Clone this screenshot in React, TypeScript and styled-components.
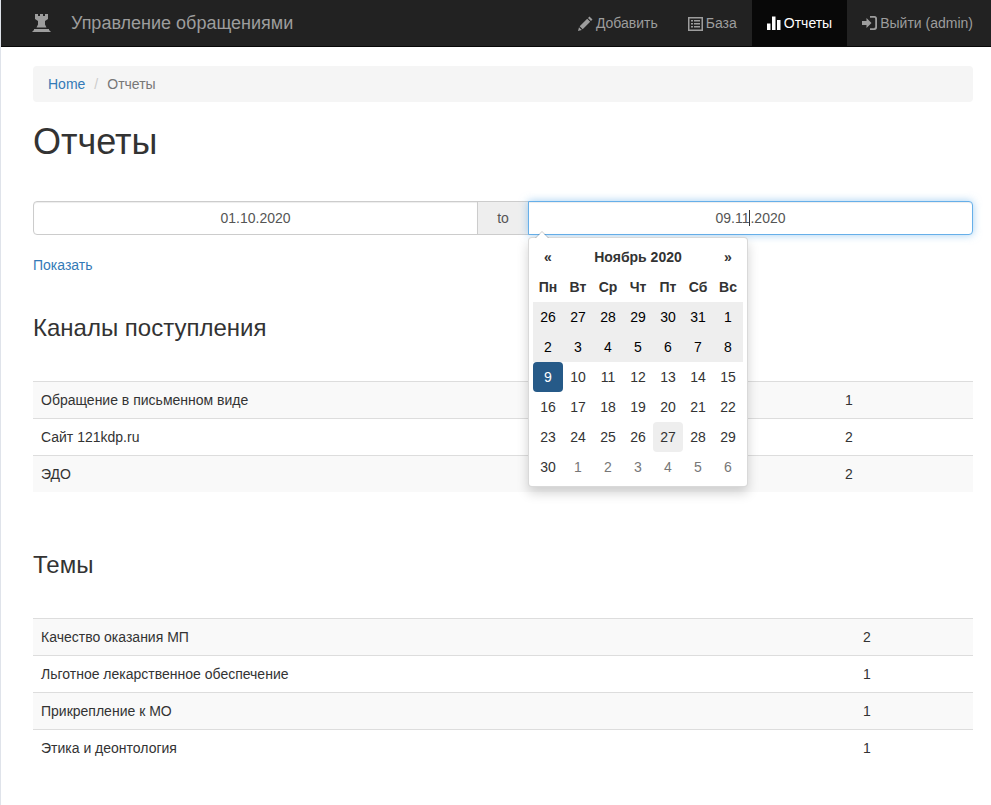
import React from "react";
import styled, { createGlobalStyle } from "styled-components";

const channels = [
  { name: "Обращение в письменном виде", count: 1 },
  { name: "Сайт 121kdp.ru", count: 2 },
  { name: "ЭДО", count: 2 },
];

const topics = [
  { name: "Качество оказания МП", count: 2 },
  { name: "Льготное лекарственное обеспечение", count: 1 },
  { name: "Прикрепление к МО", count: 1 },
  { name: "Этика и деонтология", count: 1 },
];

const weekDays = ["Пн", "Вт", "Ср", "Чт", "Пт", "Сб", "Вс"];

type TDay = { label: number; kind?: "range" | "active" | "hover" | "muted" };

const range = (from: number, to: number, kind?: TDay["kind"]): TDay[] =>
  Array.from({ length: to - from + 1 }, (_, i) => ({ label: from + i, kind }));

const days: TDay[] = [
  ...range(26, 31, "range"),
  ...range(1, 8, "range"),
  { label: 9, kind: "active" },
  ...range(10, 26),
  { label: 27, kind: "hover" },
  ...range(28, 30),
  ...range(1, 6, "muted"),
];

const GlobalStyle = createGlobalStyle`
  * {
    box-sizing: border-box;
  }

  body {
    margin: 0;
    background: #fff;
    border-left: 1px solid #dfe3ea;
    font-family: "Liberation Sans", Arial, sans-serif;
    font-size: 14px;
    line-height: 20px;
    color: #333;
  }
`;

const Navbar = styled.nav`
  display: flex;
  justify-content: space-between;
  height: 47px;
  padding: 0 3px 0 31px;
  background: #222;
  border-bottom: 1px solid #080808;
`;

const Brand = styled.a`
  display: flex;
  align-items: center;
  gap: 20px;
  font-size: 18px;
  color: #9d9d9d;
`;

const NavList = styled.div`
  display: flex;
`;

const NavItem = styled.a<{ $active?: boolean }>`
  display: flex;
  align-items: center;
  gap: 3px;
  padding: 0 15px;
  color: ${(p) => (p.$active ? "#fff" : "#9d9d9d")};
  background: ${(p) => (p.$active ? "#080808" : "transparent")};
`;

const Container = styled.main`
  padding: 19px 18px 39px 32px;
`;

const Breadcrumb = styled.div`
  display: flex;
  gap: 9px;
  padding: 8px 15px;
  margin-bottom: 20px;
  background: #f5f5f5;
  border-radius: 4px;
  color: #777;
`;

const Crumb = styled.a`
  color: #337ab7;
`;

const Separator = styled.span`
  color: #ccc;
`;

const Title = styled.h1`
  margin: 0 0 39px;
  font-size: 36px;
  line-height: 40px;
  font-weight: 500;
`;

const DateRange = styled.div`
  position: relative;
  display: flex;
`;

const DateField = styled.div<{ $focused?: boolean }>`
  flex: 1;
  height: 34px;
  padding: 6px 12px;
  text-align: center;
  color: #555;
  background: #fff;
  border: 1px solid ${(p) => (p.$focused ? "#66afe9" : "#ccc")};
  border-radius: ${(p) => (p.$focused ? "0 4px 4px 0" : "4px 0 0 4px")};
  box-shadow: inset 0 1px 1px rgba(0, 0, 0, 0.075)
    ${(p) => (p.$focused ? ", 0 0 8px rgba(102, 175, 233, 0.6)" : "")};
`;

const Caret = styled.span`
  display: inline-block;
  width: 0;
  height: 16px;
  vertical-align: -3px;
  border-left: 1px solid #333;
`;

const AddOn = styled.div`
  width: 52px;
  margin: 0 -1px;
  padding: 6px 0;
  text-align: center;
  color: #555;
  background: #eee;
  border: 1px solid #ccc;
`;

const Picker = styled.div`
  position: absolute;
  top: 36px;
  left: 495px;
  z-index: 2;
  width: 220px;
  padding: 4px;
  background: #fff;
  border: 1px solid rgba(0, 0, 0, 0.15);
  border-radius: 4px;
  box-shadow: 0 6px 12px rgba(0, 0, 0, 0.175);

  &::before {
    content: "";
    position: absolute;
    top: -7px;
    left: 6px;
    border-right: 7px solid transparent;
    border-bottom: 7px solid rgba(0, 0, 0, 0.2);
    border-left: 7px solid transparent;
  }

  &::after {
    content: "";
    position: absolute;
    top: -6px;
    left: 7px;
    border-right: 6px solid transparent;
    border-bottom: 6px solid #fff;
    border-left: 6px solid transparent;
  }
`;

const PickerGrid = styled.div`
  display: grid;
  grid-template-columns: repeat(7, 30px);
  grid-auto-rows: 30px;
`;

const PickerHead = styled.div<{ $wide?: boolean }>`
  grid-column: ${(p) => (p.$wide ? "span 5" : "span 1")};
  display: flex;
  align-items: center;
  justify-content: center;
  font-weight: 700;
`;

const DayCell = styled.div<{ $kind?: TDay["kind"] }>`
  display: flex;
  align-items: center;
  justify-content: center;
  color: ${(p) =>
    p.$kind === "active"
      ? "#fff"
      : p.$kind === "muted"
        ? "#777"
        : p.$kind === "range"
          ? "#000"
          : "#333"};
  background: ${(p) =>
    p.$kind === "active"
      ? "#265a88"
      : p.$kind === "range" || p.$kind === "hover"
        ? "#eee"
        : "transparent"};
  border-radius: ${(p) => (p.$kind === "range" ? "0" : "4px")};
`;

const ShowLink = styled.a`
  display: block;
  margin: 20px 0 40px;
  color: #337ab7;
`;

const SectionTitle = styled.h3`
  margin: 0 0 40px;
  font-size: 24px;
  line-height: 26px;
  font-weight: 500;
`;

const ReportTable = styled.table<{ $gap?: boolean }>`
  width: 100%;
  margin-bottom: 60px;
  border-collapse: collapse;
  border-spacing: 0;

  tr:nth-child(odd) {
    background: #f9f9f9;
  }
`;

const NameCell = styled.td`
  padding: 8px;
  border-top: 1px solid #ddd;
`;

const CountCell = styled.td<{ $width: number }>`
  width: ${(p) => p.$width}px;
  padding: 8px;
  border-top: 1px solid #ddd;
`;

function TowerIcon() {
  return (
    <svg width="19" height="18" viewBox="0 0 19 18" fill="currentColor">
      <path d="M3 0h3v2h2V0h3v2h2V0h3v5l-3 2v3.5l1.500 3h-10l1.500-3V7L3 5z" />
      <path d="M2 15h15v1l2 2H0l2-2z" />
    </svg>
  );
}

function PencilIcon() {
  return (
    <svg width="15" height="15" viewBox="0 0 15 15" fill="currentColor">
      <path d="M11.500 0.500l3 3-1.500 1.500-3-3zM9.200 2.800l3 3-7.500 7.500-3-3zM1 11.200l2.800 2.800L0 15z" />
    </svg>
  );
}

function ListIcon() {
  return (
    <svg width="15" height="15" viewBox="0 0 15 15" fill="currentColor">
      <path
        fillRule="evenodd"
        d="M0 1h15v14H0zM1.500 2.500v11h12v-11zM3 4h2v1.500H3zM6 4h6v1.500H6zM3 7h2v1.500H3zM6 7h6v1.500H6zM3 10h2v1.500H3zM6 10h6v1.500H6z"
      />
    </svg>
  );
}

function StatsIcon() {
  return (
    <svg width="14" height="14" viewBox="0 0 14 14" fill="currentColor">
      <path d="M0 7.500h3.500V14H0zM5 0.500h3.500V14H5zM10 4h3.500v10H10z" />
    </svg>
  );
}

function LoginIcon() {
  return (
    <svg width="15" height="14" viewBox="0 0 15 14" fill="currentColor">
      <path d="M0 5h4.500V2l5 5-5 5V9H0z" />
      <path d="M8 0h4.500C14 0 15 1 15 2.500v9c0 1.500-1 2.500-2.500 2.500H8v-1.800h4c.8 0 1.200-.4 1.200-1.200V3c0-.8-.4-1.200-1.200-1.200H8z" />
    </svg>
  );
}

export default function App() {
  return (
    <>
      <GlobalStyle />
      <Navbar>
        <Brand>
          <TowerIcon />
          Управление обращениями
        </Brand>
        <NavList>
          <NavItem>
            <PencilIcon /> Добавить
          </NavItem>
          <NavItem>
            <ListIcon /> База
          </NavItem>
          <NavItem $active>
            <StatsIcon /> Отчеты
          </NavItem>
          <NavItem>
            <LoginIcon /> Выйти (admin)
          </NavItem>
        </NavList>
      </Navbar>
      <Container>
        <Breadcrumb>
          <Crumb>Home</Crumb>
          <Separator>/</Separator>
          Отчеты
        </Breadcrumb>
        <Title>Отчеты</Title>
        <DateRange>
          <DateField>01.10.2020</DateField>
          <AddOn>to</AddOn>
          <DateField $focused>
            09.11
            <Caret />
            .2020
          </DateField>
          <Picker>
            <PickerGrid>
              <PickerHead>«</PickerHead>
              <PickerHead $wide>Ноябрь 2020</PickerHead>
              <PickerHead>»</PickerHead>
              {weekDays.map((d) => (
                <PickerHead key={d}>{d}</PickerHead>
              ))}
              {days.map((d, i) => (
                <DayCell key={i} $kind={d.kind}>
                  {d.label}
                </DayCell>
              ))}
            </PickerGrid>
          </Picker>
        </DateRange>
        <ShowLink>Показать</ShowLink>
        <SectionTitle>Каналы поступления</SectionTitle>
        <ReportTable>
          <tbody>
            {channels.map((r) => (
              <tr key={r.name}>
                <NameCell>{r.name}</NameCell>
                <CountCell $width={136}>{r.count}</CountCell>
              </tr>
            ))}
          </tbody>
        </ReportTable>
        <SectionTitle>Темы</SectionTitle>
        <ReportTable>
          <tbody>
            {topics.map((r) => (
              <tr key={r.name}>
                <NameCell>{r.name}</NameCell>
                <CountCell $width={118}>{r.count}</CountCell>
              </tr>
            ))}
          </tbody>
        </ReportTable>
      </Container>
    </>
  );
}
